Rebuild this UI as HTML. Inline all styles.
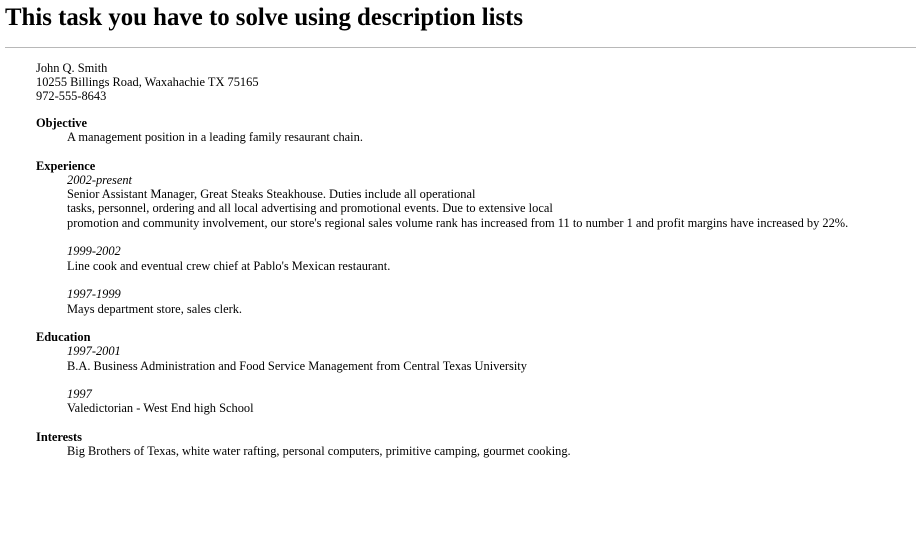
<!DOCTYPE html>
<html><head><meta charset="utf-8"><style>
html,body{margin:0;padding:0;background:#fff;width:916px;height:540px;overflow:hidden}
body{font-family:"Liberation Serif",serif;color:#000;position:relative}
h1{position:absolute;left:5px;top:4px;margin:0;font-size:24.8px;font-weight:bold;white-space:nowrap;line-height:28px}
.hr{position:absolute;left:5px;right:0;top:47px;height:1px;background:#b8b8b8}
.l{position:absolute;font-size:12.42px;line-height:14px;white-space:nowrap}
.a{left:36px}.d{left:67px}.b{font-weight:bold}.i{font-style:italic}
</style></head><body>
<h1>This task you have to solve using description lists</h1>
<div class="hr"></div>
<div class="l a" style="top:61px">John Q. Smith</div>
<div class="l a" style="top:75px">10255 Billings Road, Waxahachie TX 75165</div>
<div class="l a" style="top:89px">972-555-8643</div>
<div class="l a b" style="top:116px">Objective</div>
<div class="l d" style="top:130px">A management position in a leading family resaurant chain.</div>
<div class="l a b" style="top:159px">Experience</div>
<div class="l d i" style="top:173px">2002-present</div>
<div class="l d" style="top:187px">Senior Assistant Manager, Great Steaks Steakhouse. Duties include all operational</div>
<div class="l d" style="top:201px">tasks, personnel, ordering and all local advertising and promotional events. Due to extensive local</div>
<div class="l d" style="top:216px">promotion and community involvement, our store's regional sales volume rank has increased from 11 to number 1 and profit margins have increased by 22%.</div>
<div class="l d i" style="top:244px">1999-2002</div>
<div class="l d" style="top:259px">Line cook and eventual crew chief at Pablo's Mexican restaurant.</div>
<div class="l d i" style="top:287px">1997-1999</div>
<div class="l d" style="top:302px">Mays department store, sales clerk.</div>
<div class="l a b" style="top:330px">Education</div>
<div class="l d i" style="top:344px">1997-2001</div>
<div class="l d" style="top:359px">B.A. Business Administration and Food Service Management from Central Texas University</div>
<div class="l d i" style="top:387px">1997</div>
<div class="l d" style="top:401px">Valedictorian - West End high School</div>
<div class="l a b" style="top:430px">Interests</div>
<div class="l d" style="top:444px">Big Brothers of Texas, white water rafting, personal computers, primitive camping, gourmet cooking.</div>
</body></html>
